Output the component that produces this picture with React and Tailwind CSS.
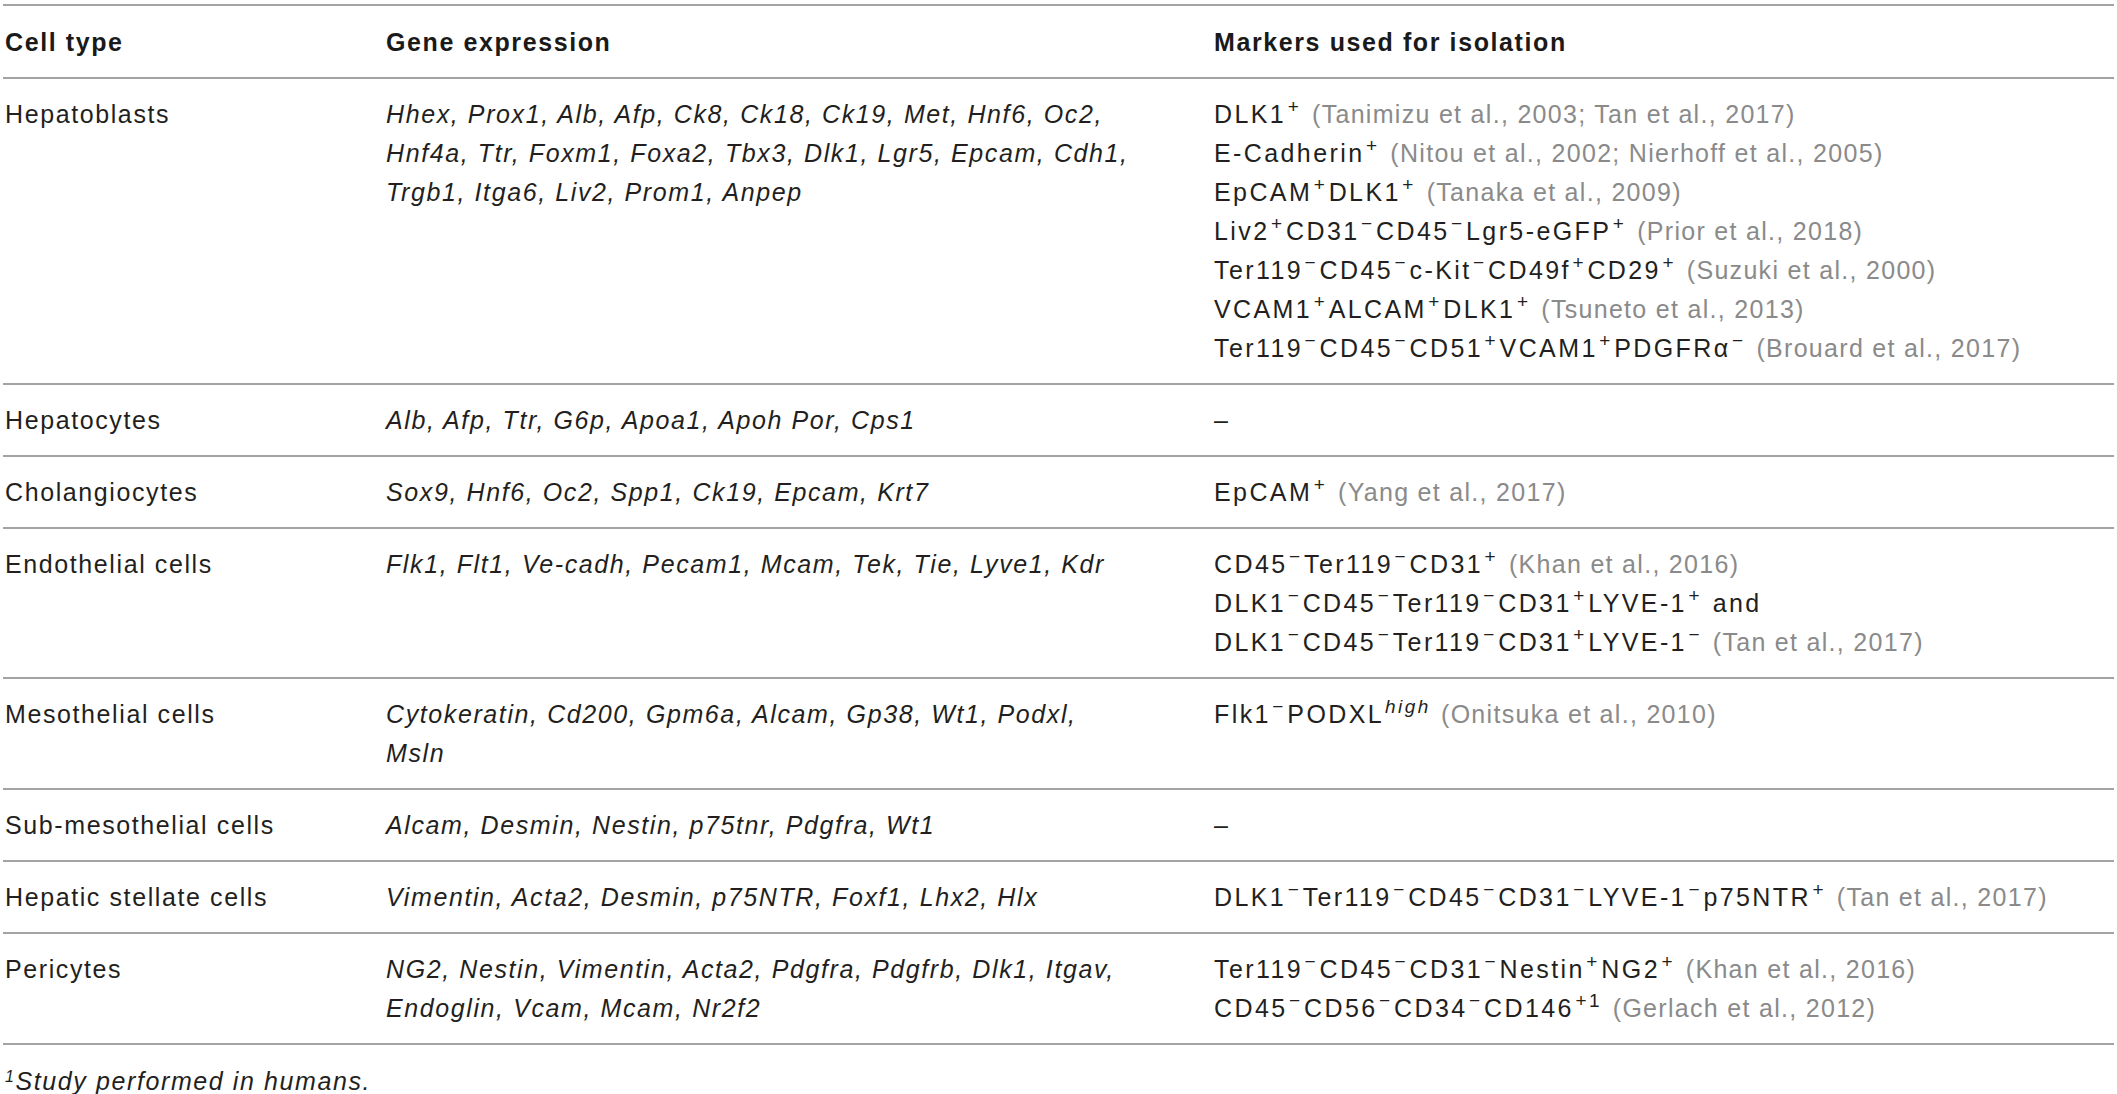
import React from "react";

const P = () => <sup className="text-[19px] px-[1.5px]">+</sup>;
const N = () => <sup className="text-[19px] px-[1.5px]">−</sup>;
const C = ({ children }) => (
  <span className="text-[#8a8a8a] tracking-[1.3px]">{children}</span>
);

const rows = [
  {
    type: "Hepatoblasts",
    genes: [
      "Hhex, Prox1, Alb, Afp, Ck8, Ck18, Ck19, Met, Hnf6, Oc2,",
      "Hnf4a, Ttr, Foxm1, Foxa2, Tbx3, Dlk1, Lgr5, Epcam, Cdh1,",
      "Trgb1, Itga6, Liv2, Prom1, Anpep",
    ],
    markers: [
      <>DLK1<P /> <C>(Tanimizu et al., 2003; Tan et al., 2017)</C></>,
      <>E-Cadherin<P /> <C>(Nitou et al., 2002; Nierhoff et al., 2005)</C></>,
      <>EpCAM<P />DLK1<P /> <C>(Tanaka et al., 2009)</C></>,
      <>Liv2<P />CD31<N />CD45<N />Lgr5-eGFP<P /> <C>(Prior et al., 2018)</C></>,
      <>Ter119<N />CD45<N />c-Kit<N />CD49f<P />CD29<P /> <C>(Suzuki et al., 2000)</C></>,
      <>VCAM1<P />ALCAM<P />DLK1<P /> <C>(Tsuneto et al., 2013)</C></>,
      <>Ter119<N />CD45<N />CD51<P />VCAM1<P />PDGFRα<N /> <C>(Brouard et al., 2017)</C></>,
    ],
  },
  {
    type: "Hepatocytes",
    genes: ["Alb, Afp, Ttr, G6p, Apoa1, Apoh Por, Cps1"],
    markers: [<>–</>],
  },
  {
    type: "Cholangiocytes",
    genes: ["Sox9, Hnf6, Oc2, Spp1, Ck19, Epcam, Krt7"],
    markers: [<>EpCAM<P /> <C>(Yang et al., 2017)</C></>],
  },
  {
    type: "Endothelial cells",
    genes: ["Flk1, Flt1, Ve-cadh, Pecam1, Mcam, Tek, Tie, Lyve1, Kdr"],
    markers: [
      <>CD45<N />Ter119<N />CD31<P /> <C>(Khan et al., 2016)</C></>,
      <>DLK1<N />CD45<N />Ter119<N />CD31<P />LYVE-1<P /> and</>,
      <>DLK1<N />CD45<N />Ter119<N />CD31<P />LYVE-1<N /> <C>(Tan et al., 2017)</C></>,
    ],
  },
  {
    type: "Mesothelial cells",
    genes: ["Cytokeratin, Cd200, Gpm6a, Alcam, Gp38, Wt1, Podxl,", "Msln"],
    markers: [
      <>Flk1<N />PODXL<sup className="text-[19px] italic px-[1px]">high</sup> <C>(Onitsuka et al., 2010)</C></>,
    ],
  },
  {
    type: "Sub-mesothelial cells",
    genes: ["Alcam, Desmin, Nestin, p75tnr, Pdgfra, Wt1"],
    markers: [<>–</>],
  },
  {
    type: "Hepatic stellate cells",
    genes: ["Vimentin, Acta2, Desmin, p75NTR, Foxf1, Lhx2, Hlx"],
    markers: [
      <>DLK1<N />Ter119<N />CD45<N />CD31<N />LYVE-1<N />p75NTR<P /> <C>(Tan et al., 2017)</C></>,
    ],
  },
  {
    type: "Pericytes",
    genes: [
      "NG2, Nestin, Vimentin, Acta2, Pdgfra, Pdgfrb, Dlk1, Itgav,",
      "Endoglin, Vcam, Mcam, Nr2f2",
    ],
    markers: [
      <>Ter119<N />CD45<N />CD31<N />Nestin<P />NG2<P /> <C>(Khan et al., 2016)</C></>,
      <>CD45<N />CD56<N />CD34<N />CD146<sup className="text-[19px] px-[1.5px]">+1</sup> <C>(Gerlach et al., 2012)</C></>,
    ],
  },
];

export default function App() {
  return (
    <div className="w-[2117px] h-[1094px] bg-white overflow-hidden font-['Liberation_Sans',Arial,sans-serif] text-[25px] leading-[39px] tracking-[1.6px] text-[#231f20]">
      <div className="mx-[3px] mt-[4px] border-t-2 border-[#a3a3a3]">
        <div className="grid grid-cols-[381px_828px_1fr] border-b-2 border-[#a3a3a3] font-bold text-[#1a1a1a]">
          <div className="pl-[2px] pt-[17px] pb-[15px] whitespace-nowrap">Cell type</div>
          <div className="pl-[2px] pt-[17px] pb-[15px] whitespace-nowrap">Gene expression</div>
          <div className="pl-[2px] pt-[17px] pb-[15px] whitespace-nowrap">Markers used for isolation</div>
        </div>
        {rows.map((r) => (
          <div
            key={r.type}
            className="grid grid-cols-[381px_828px_1fr] border-b-2 border-[#a3a3a3]"
          >
            <div className="pl-[2px] py-[15.5px] whitespace-nowrap">{r.type}</div>
            <div className="pl-[2px] py-[15.5px] italic whitespace-nowrap">
              {r.genes.map((g, i) => (
                <div key={i}>{g}</div>
              ))}
            </div>
            <div className="pl-[2px] py-[15.5px] whitespace-nowrap tracking-[2.4px]">
              {r.markers.map((m, i) => (
                <div key={i}>{m}</div>
              ))}
            </div>
          </div>
        ))}
        <div className="pl-[2px] pt-[21px] leading-[30px] italic whitespace-nowrap">
          <sup className="text-[16px]">1</sup>Study performed in humans.
        </div>
      </div>
    </div>
  );
}
